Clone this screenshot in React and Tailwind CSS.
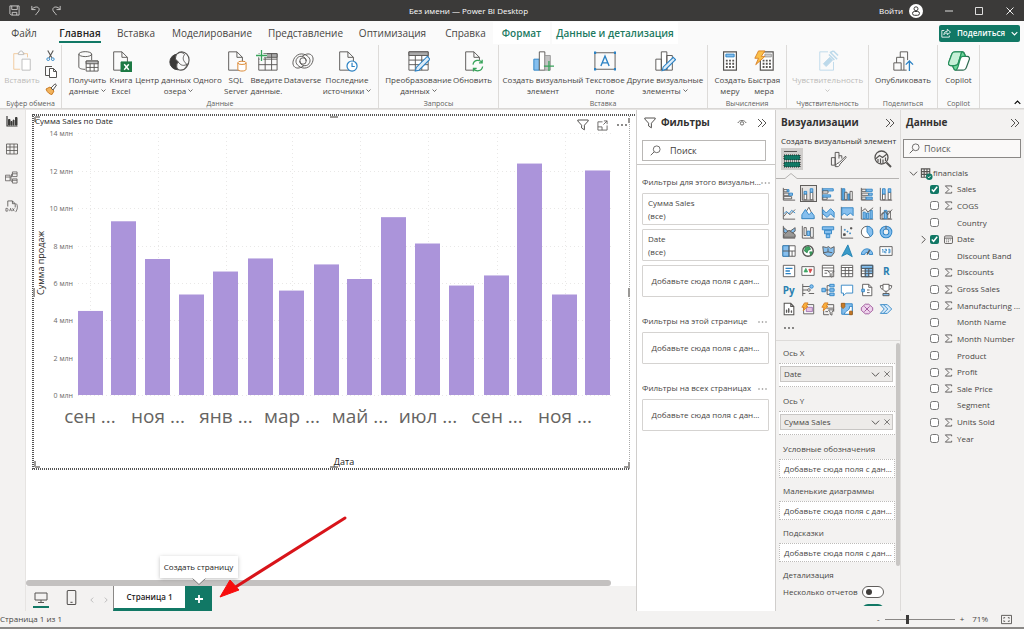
import React from 'react';

const DARK = '#565452';
const BLUE = '#2b82c4';
const SKY = '#86bfee';

// Small wrapper so that all line icons share the same stroke settings
const Svg = ({ box = 16, className = 'size-4', children }) => (
  <svg
    viewBox={`0 0 ${box} ${box}`}
    className={`shrink-0 ${className}`}
    fill="none"
    stroke={DARK}
    strokeWidth="1"
    aria-hidden="true"
  >
    {children}
  </svg>
);

const Chevrons = () => (
  <Svg box={10} className="size-[10px]">
    <path d="M1 1l4 4-4 4M5 1l4 4-4 4" />
  </Svg>
);

const ChevronDown = ({ className = 'size-[5px]', weight = 1.6 }) => (
  <svg viewBox="0 0 10 10" className={`inline-block shrink-0 ${className}`} fill="none" stroke="currentColor" strokeWidth={weight} aria-hidden="true">
    <path d="M1 3l4 4 4-4" />
  </svg>
);

const SearchIcon = () => (
  <Svg box={12} className="size-[11px]">
    <circle cx="7.3" cy="4.7" r="3.7" strokeWidth="0.9" />
    <path d="M4.6 7.4L0.8 11.2" />
  </Svg>
);

const FilterIcon = ({ className = 'size-3' }) => (
  <Svg box={12} className={className}>
    <path d="M0.8 1h10.4v1L7.4 6.2v4.6L4.6 9V6.2L0.8 2z" />
  </Svg>
);

/* ---------- Ribbon icons, 24 x 24 ---------- */
const pageShape = 'M4 2h9l6 6v14H4zM13 2v6h6';

const ribbonIcons = {
  paste: (
    <g>
      <path d="M8 4H3v17h7M13 4h5v4" stroke="#f0c79a" />
      <path d="M8 5V3h1a2 2 0 0 1 4 0h1v2z" stroke="#bbb" />
      <path d="M12 10h9v12h-9z" stroke="#bbb" fill="#fff" />
    </g>
  ),
  getData: (
    <g>
      <ellipse cx="9" cy="4.5" rx="7" ry="2.7" />
      <path d="M2 4.5v14c0 1.5 3 2.6 7 2.6M16 4.5V11" />
      <path d="M10 12h13v11H10z" fill="#fff" />
      <path d="M10 12h13v3H10z" fill="#bbb" />
      <path d="M10 19h13M14.3 15v8M18.7 15v8" />
    </g>
  ),
  excel: (
    <g>
      <path d={pageShape} />
      <path d="M12 13h12v11H12z" fill="#1d7a45" stroke="#1d7a45" />
      <path d="M15.5 15.5l5 6M20.5 15.5l-5 6" stroke="#fff" strokeWidth="1.6" />
    </g>
  ),
  oneLake: (
    <g>
      <circle cx="10.500" cy="13" r="8.500" fill="#3b3a39" stroke="#3b3a39" />
      <path d="M8 10c0-5 3-8 7-8s8 4 8 9-4 11-9 11-6-6-3-9z" fill="#fafafa" strokeWidth="1.200" />
      <path d="M9 5c3-3 7-3 9 0-2 3-2 6 1 9 2 2 2 3 0 5" />
      <path d="M11 13c3 4 6 5 11 2" />
    </g>
  ),
  sql: (
    <g>
      <path d={pageShape} />
      <path d="M14 14v7c0 2.600 9 2.600 9 0v-7" stroke="#d98025" fill="#fff" />
      <ellipse cx="18.500" cy="14" rx="4.500" ry="1.800" stroke="#d98025" fill="#fff" />
    </g>
  ),
  enterData: (
    <g>
      <path d="M3 4h20v18H3z" />
      <path d="M9 4h14v4H9z" fill="#aaa" />
      <path d="M3 10h20M3 16h20M10 6v16M17 4v18" />
      <path d="M6 0v12M0 6h12" stroke="#fafafa" strokeWidth="4" />
      <path d="M6 0v12M0 6h12" stroke="#37a35a" strokeWidth="1.400" />
    </g>
  ),
  dataverse: (
    <g>
      <circle cx="12" cy="12" r="3.500" />
      <path d="M8.500 12c0 5 7 7 10 3 3-4 0-9-6-10.500C6 3 1 9 1 14c0 4 3 6.500 7 5.500 2-.5 4-1.500 5-2.500" />
      <path d="M15.500 12c0-5-7-7-10-3-3 4 0 9 6 10.500C18 21 23 15 23 10c0-4-3-6.500-7-5.500-2 .5-4 1.500-5 2.500" />
    </g>
  ),
  recent: (
    <g>
      <path d={pageShape} />
      <circle cx="17.500" cy="17.500" r="5.500" fill="#fff" stroke={BLUE} strokeWidth="1.300" />
      <path d="M17.500 14v4h3" stroke={BLUE} strokeWidth="1.300" />
    </g>
  ),
  transform: (
    <g>
      <path d="M1 2h21v20H1z" fill="#fff" />
      <path d="M1 2h21v4H1z" fill="#aaa" />
      <path d="M1 11h21M1 16h21M8 6v16M15 6v16" />
      <path d="M21 7l3 3-12 12-4 1 1-4z" fill="#dcecf9" stroke={BLUE} strokeWidth="1.200" />
    </g>
  ),
  refresh: (
    <g>
      <path d={pageShape} />
      <circle cx="17" cy="17" r="6.500" fill="#fafafa" stroke="none" />
      <path d="M12 16a5.400 5.400 0 0 1 10-2M22 10.500V14h-3.500M22.500 18a5.400 5.400 0 0 1-10 2M12.500 23.500V20H16" stroke="#37a35a" strokeWidth="1.400" />
    </g>
  ),
  newVisual: (
    <g>
      <path d="M2 10h6v12H2z" fill={SKY} stroke={BLUE} />
      <path d="M8 2h6v20H8z" fill="#fff" />
      <path d="M14 6h6v16h-6z" fill="#c4c4c4" stroke="#999" />
      <path d="M18.500 12v11M13 17.500h11" stroke="#37a35a" strokeWidth="1.400" />
    </g>
  ),
  textBox: (
    <g>
      <path d="M1 3h22v18H1z" />
      <path d="M7.500 17.500L12 6.500l4.500 11M9 14h6" stroke={BLUE} strokeWidth="1.500" />
      <path d="M1 3h.1M23 3h.1M1 21h.1M23 21h.1" stroke={BLUE} strokeWidth="2.500" strokeLinecap="square" />
    </g>
  ),
  otherVisuals: (
    <g>
      <path d="M2 10h6v12H2zM8 2h6v20H8zM14 6h6v16h-6z" fill="#fff" />
      <path d="M21 8l2.500 2.500L13 21l-4 1.500 1-4z" fill="#dcecf9" stroke={BLUE} strokeWidth="1.200" />
    </g>
  ),
  measure: (
    <g>
      <path d="M5 2h14v20H5z" fill="#fff" strokeWidth="1.300" />
      <path d="M7.500 4.500h9v3h-9z" fill={SKY} stroke={BLUE} />
      <path d="M7.500 11.500h2m1.500 0h2m1.500 0h2M7.500 15h2m1.500 0h2m1.500 0h2M7.500 18.500h2m1.500 0h2m1.500 0h2" strokeWidth="2" />
    </g>
  ),
  quickMeasure: (
    <g>
      <path d="M8 2h14v20H8z" fill="#fff" strokeWidth="1.300" />
      <path d="M13 4.500h7v3h-7z" fill="#ccc" stroke="#999" />
      <path d="M10.500 11.500h2m1.500 0h2m1.500 0h2M10.500 15h2m1.500 0h2m1.500 0h2M10.500 18.500h2m1.500 0h2m1.500 0h2" strokeWidth="2" />
      <path d="M6 1h7L9 7h4L3 16l3-7H2z" fill="#fbc04a" stroke="#d98025" />
    </g>
  ),
  sensitivity: (
    <g stroke="#bcd9ea">
      <path d="M12 2H3v20h15V13" />
      <path d="M7 15l7-7 3 3-7 7z" fill="#bcd9ea" />
      <path d="M13 5l6 6M15 3l7 7M18 1l5 5M14 3l4-2" strokeWidth="1.600" />
    </g>
  ),
  publish: (
    <g>
      <path d="M2 22v-8h8v8zM5 14V8h8v14h-3M9 8V2h8v9M13 22h3" />
      <path d="M19 23V12M15 16l4-4 4 4" stroke={BLUE} strokeWidth="1.400" />
    </g>
  ),
  copilot: (
    <g strokeWidth="1.300">
      <path d="M8 2h8c2 0 2 2 3 5h2c2 0 3 2 2 4l-3 8c-1 3-2 3-4 3H9c-3 0-3-3-4-5H3c-2 0-3-2-2-4l3-8c1-3 2-3 4-3z" fill="#fff" stroke="#2d6b50" />
      <path d="M8 2h7l-4 13c-.5 2-2 2-4 2H3c-2 0-3-2-2-4l3-8c1-3 2-3 4-3z" fill="#c6f0d7" stroke="#25915c" />
      <path d="M15 2c2 0 3 2 4 5h-3c-2 0-2 1-3 4l-2 7c-1 3-2 4-3 4-2-1-2-3-3-5h2c2 0 3 0 4-2z" fill="#6fd79c" stroke="#25915c" />
    </g>
  ),
};

const RibbonButton = ({ icon, lines, width, disabled, arrow }) => (
  <button
    type="button"
    disabled={disabled}
    className={`flex shrink-0 flex-col items-center whitespace-nowrap text-[8px] leading-[11px] ${width} ${disabled ? 'text-[#bdbbb9]' : 'text-[#484644]'}`}
  >
    <Svg box={24} className="mb-[2px] size-[22px]">{ribbonIcons[icon]}</Svg>
    {lines.map((line, i) => (
      <span key={line} className="flex items-center gap-[2px]">
        {line}
        {arrow && i === lines.length - 1 && lines.length > 1 && <ChevronDown />}
      </span>
    ))}
    {arrow && lines.length === 1 && <ChevronDown className="mt-[3px] size-[5px]" />}
  </button>
);

const RibbonGroup = ({ label, width, children }) => (
  <div className={`flex shrink-0 flex-col justify-between border-r border-[#dddbd9] ${width}`}>
    <div className="flex justify-center pt-[5px]">{children}</div>
    <div className="text-center text-[7px] leading-[8px] text-[#605e5c]">{label}</div>
  </div>
);

const tabs = [
  { name: 'Файл', width: 'w-[48px]' },
  { name: 'Главная', width: 'w-[64px]', active: true },
  { name: 'Вставка', width: 'w-[48px]' },
  { name: 'Моделирование', width: 'w-[104px]' },
  { name: 'Представление', width: 'w-[83px]' },
  { name: 'Оптимизация', width: 'w-[91px]' },
  { name: 'Справка', width: 'w-[55px]' },
];

const TitleBar = () => (
  <header className="flex h-[21px] shrink-0 items-center bg-[#3b3a39] text-[8px] text-white">
    <div className="flex flex-1 items-center gap-[10px] pl-[9px]">
      <button type="button" aria-label="Сохранить">
        <svg viewBox="0 0 12 12" className="size-[11px]" fill="none" stroke="#d0cfce" aria-hidden="true">
          <path d="M1 1h10v10H2.500L1 9.500zM3 1v4h6V1M3.500 11V8h5v3" />
        </svg>
      </button>
      <button type="button" aria-label="Отменить">
        <svg viewBox="0 0 12 12" className="size-[11px]" fill="none" stroke="#d0cfce" aria-hidden="true">
          <path d="M2 1v4h4M2 5c2-3.500 8-4 8 0 0 2-2 3-4 6" />
        </svg>
      </button>
      <button type="button" aria-label="Повторить">
        <svg viewBox="0 0 12 12" className="size-[11px]" fill="none" stroke="#d0cfce" aria-hidden="true">
          <path d="M10 1v4H6M10 5C8 1.500 2 1 2 5c0 2 2 3 4 6" />
        </svg>
      </button>
    </div>
    <div>Без имени — Power BI Desktop</div>
    <div className="flex flex-1 items-center justify-end pr-[10px] pl-[86px]">
      <button type="button" className="flex items-center gap-[6px]">
        Войти
        <svg viewBox="0 0 14 14" className="size-[14px]" aria-hidden="true">
          <circle cx="7" cy="7" r="7" fill="#fff" />
          <circle cx="7" cy="4.800" r="2" fill="none" stroke="#3b3a39" />
          <rect x="3.500" y="7.500" width="7" height="3.800" rx="1.900" fill="none" stroke="#3b3a39" />
        </svg>
      </button>
      <button type="button" aria-label="Свернуть" className="ml-[22px]">
        <svg viewBox="0 0 8 8" className="size-2" stroke="#ddd" aria-hidden="true"><path d="M0 4h8" /></svg>
      </button>
      <button type="button" aria-label="Развернуть" className="ml-[22px]">
        <svg viewBox="0 0 8 8" className="size-2" fill="none" stroke="#ddd" aria-hidden="true"><path d="M.5.5h7v7h-7z" /></svg>
      </button>
      <button type="button" aria-label="Закрыть" className="ml-[23px]">
        <svg viewBox="0 0 8 8" className="size-2" stroke="#eee" aria-hidden="true"><path d="M.5.5l7 7M7.500.5l-7 7" /></svg>
      </button>
    </div>
  </header>
);

const TabBar = () => (
  <nav className="flex h-[24px] shrink-0 items-center bg-[#fafafa] text-[10px] text-[#484644]">
    {tabs.map((tab) => (
      <button key={tab.name} type="button" className={`flex h-full shrink-0 justify-center pt-[5px] leading-[14px] ${tab.width}`}>
        <span className={tab.active ? 'h-[17px] border-b-2 border-[#117865] font-semibold text-[#252423]' : ''}>{tab.name}</span>
      </button>
    ))}
    <button type="button" className="h-[22px] w-[57px] shrink-0 bg-white font-semibold text-[#217a5f]">Формат</button>
    <button type="button" className="ml-[2px] h-[22px] w-[126px] shrink-0 whitespace-nowrap bg-white font-semibold text-[#217a5f]">Данные и детализация</button>
    <button type="button" className="mr-1 ml-auto flex h-[17px] w-[81px] items-center justify-center gap-[6px] rounded-[2px] bg-[#117865] text-[8px] font-semibold text-white">
      <svg viewBox="0 0 12 12" className="size-[10px]" fill="none" stroke="#fff" aria-hidden="true">
        <path d="M4 3H1v8h9V9M3.500 8c0-3 2-4 4-4V1.500L11.500 5 7.500 8V6c-2 0-3 .5-4 2z" />
      </svg>
      Поделиться
      <ChevronDown className="size-[7px]" />
    </button>
  </nav>
);

const Ribbon = () => (
  <div className="flex h-[64px] shrink-0 border-b border-[#d9d7d5] bg-[#fafafa]">
    <RibbonGroup label="Буфер обмена" width="w-[62px]">
      <RibbonButton icon="paste" lines={['Вставить']} width="w-[36px]" disabled />
      <div className="ml-[5px] flex flex-col gap-[5px]">
        <button type="button" aria-label="Вырезать">
          <Svg box={12} className="size-[11px]">
            <path d="M3 .5l4.500 8M9 .5l-4.500 8" strokeWidth="1.200" />
            <circle cx="3.500" cy="10" r="1.500" stroke={BLUE} />
            <circle cx="8.500" cy="10" r="1.500" stroke={BLUE} />
          </Svg>
        </button>
        <button type="button" aria-label="Копировать">
          <Svg box={12} className="size-[12px]">
            <path d="M4 9.500H.5v-9H7" /><path d="M4.500 2.500h4l3 3v6h-7zM8.500 2.500v3h3" fill="#fff" />
          </Svg>
        </button>
        <button type="button" aria-label="Формат по образцу">
          <Svg box={12} className="size-[12px]">
            <path d="M1 6l4-2 4 4-2 3.500c-2 0-5-2-6-5.500z" fill="#f2b35c" stroke="#c97b25" />
            <path d="M6 5l2 2L11.500 2 10 .8z" fill="#fff" />
          </Svg>
        </button>
      </div>
    </RibbonGroup>
    <RibbonGroup label="Данные" width="w-[317px]">
      <RibbonButton icon="getData" lines={['Получить', 'данные']} width="w-[40px]" arrow />
      <RibbonButton icon="excel" lines={['Книга', 'Excel']} width="w-[27px]" />
      <RibbonButton icon="oneLake" lines={['Центр данных Одного', 'озера']} width="w-[88px]" arrow />
      <RibbonButton icon="sql" lines={['SQL', 'Server']} width="w-[27px]" />
      <RibbonButton icon="enterData" lines={['Введите', 'данные.']} width="w-[34px]" />
      <RibbonButton icon="dataverse" lines={['Dataverse']} width="w-[38px]" />
      <RibbonButton icon="recent" lines={['Последние', 'источники']} width="w-[51px]" arrow />
    </RibbonGroup>
    <RibbonGroup label="Запросы" width="w-[120px]">
      <RibbonButton icon="transform" lines={['Преобразование', 'данных']} width="w-[68px]" arrow />
      <RibbonButton icon="refresh" lines={['Обновить']} width="w-[40px]" />
    </RibbonGroup>
    <RibbonGroup label="Вставка" width="w-[209px]">
      <RibbonButton icon="newVisual" lines={['Создать визуальный', 'элемент']} width="w-[82px]" />
      <RibbonButton icon="textBox" lines={['Текстовое', 'поле']} width="w-[42px]" />
      <RibbonButton icon="otherVisuals" lines={['Другие визуальные', 'элементы']} width="w-[78px]" arrow />
    </RibbonGroup>
    <RibbonGroup label="Вычисления" width="w-[79px]">
      <RibbonButton icon="measure" lines={['Создать', 'меру']} width="w-[34px]" />
      <RibbonButton icon="quickMeasure" lines={['Быстрая', 'мера']} width="w-[34px]" />
    </RibbonGroup>
    <RibbonGroup label="Чувствительность" width="w-[82px]">
      <RibbonButton icon="sensitivity" lines={['Чувствительность']} width="w-[70px]" disabled arrow />
    </RibbonGroup>
    <RibbonGroup label="Поделиться" width="w-[69px]">
      <RibbonButton icon="publish" lines={['Опубликовать']} width="w-[58px]" />
    </RibbonGroup>
    <RibbonGroup label="Copilot" width="w-[42px]">
      <RibbonButton icon="copilot" lines={['Copilot']} width="w-[30px]" />
    </RibbonGroup>
    <button type="button" aria-label="Свернуть ленту" className="mt-auto mr-[3px] mb-[2px] ml-auto flex">
      <ChevronDown className="size-[7px] rotate-180" />
    </button>
  </div>
);

const SideRail = () => (
  <aside className="flex w-[26px] shrink-0 flex-col items-center gap-4 border-r border-[#e6e4e2] bg-[#f3f2f1] pt-[5px] pr-[2px]">
    <button type="button" aria-label="Отчет" className="flex">
      <Svg box={12} className="size-[12px]">
        <path d="M1 1v10h10.500" strokeWidth="1.200" stroke="#3b3a39" />
        <path d="M2.500 4.500h1.500V10H2.500zM5 6.500h1V10H5zM7.200 5H8v5h-.8zM9.500 2.500H11V10H9.500z" fill="#3b3a39" stroke="#3b3a39" />
      </Svg>
    </button>
    <button type="button" aria-label="Данные" className="flex">
      <Svg box={12} className="size-[12px]">
        <path d="M.5 1h11v10H.5zM.5 4h11M.5 7.500h11M4 1v10M8 1v10" strokeWidth="0.800" />
      </Svg>
    </button>
    <button type="button" aria-label="Модель" className="flex">
      <Svg box={14} className="size-[13px]">
        <path d="M.5 4.500h5v6h-5zM.5 6.500h5M8 1h5v5H8zM8 3h5M8 8.500h5V13H8zM8 10h5M5.500 6.500H7v-3h1M6.500 7v4H8" strokeWidth="0.800" />
      </Svg>
    </button>
    <button type="button" aria-label="Запросы DAX" className="flex">
      <Svg box={14} className="size-[13px]">
        <path d="M3 7V1h5l3 3v4M8 1v3h3" strokeWidth="0.900" />
        <path d="M1 9v3h1.500c1 0 1-3 0-3zM5 12l1-3 1 3M8 9l2 3M10 9l-2 3M12.500 4c1.500 3 1 6-1 9" strokeWidth="0.800" />
      </Svg>
    </button>
  </aside>
);

// Left edge and value (in millions) of every monthly bar
const bars = [
  { x: 46, v: 4.5 }, { x: 79, v: 9.3 }, { x: 113, v: 7.28 }, { x: 147, v: 5.38 },
  { x: 181, v: 6.61 }, { x: 216, v: 7.31 }, { x: 247, v: 5.59 }, { x: 282, v: 6.99 },
  { x: 315, v: 6.21 }, { x: 349, v: 9.52 }, { x: 383, v: 8.11 }, { x: 417, v: 5.86 },
  { x: 452, v: 6.4 }, { x: 485, v: 12.39 }, { x: 520, v: 5.38 }, { x: 553, v: 12.02 },
];

const months = [
  { x: 58, label: 'сен' }, { x: 126, label: 'ноя' }, { x: 194, label: 'янв' }, { x: 260, label: 'мар' },
  { x: 328, label: 'май' }, { x: 396, label: 'июл' }, { x: 465, label: 'сен' }, { x: 533, label: 'ноя' },
];

const BASE = 281;
const UNIT = 18.68;

const SalesChart = () => (
  <div className="relative">
    <svg viewBox="0 0 604 358" className="block w-full" role="img" aria-label="Сумма Sales по Date">
      <g fill="none" stroke="#555" strokeWidth="2" strokeDasharray="1 1">
        <path d="M0 1h603M1 0v356M0 355h598" />
        <path d="M597.500 2v354" stroke="#aaa" strokeWidth="1" />
      </g>
      <g stroke="#9a9896" strokeWidth="2">
        <path d="M3 3h5M3 3v5M298 3h8M597 174v9M597 4v5M3 353h5M3 347v6M298 353h8M592 353h6M597 348v6M2 174v9" />
      </g>
      <g stroke="#e9e8e7" strokeDasharray="1 3">
        {[0, 2, 4, 6, 8, 10, 12, 14].map((v) => (
          <path key={v} d={`M46 ${Math.round(BASE - v * UNIT) + 0.5}H579`} />
        ))}
        {months.map((m) => (
          <path key={m.x} d={`M${m.x + 0.5} 19V281`} />
        ))}
      </g>
      <g fill="#6b6967" fontSize="7" textAnchor="end">
        {[0, 2, 4, 6, 8, 10, 12, 14].map((v) => (
          <text key={v} x="41" y={Math.round(BASE - v * UNIT) + 3}>{v} млн</text>
        ))}
      </g>
      {bars.map((bar) => (
        <rect key={bar.x} x={bar.x} y={BASE - bar.v * UNIT} width="25" height={bar.v * UNIT} fill="#ab94da" />
      ))}
      <g fill="#666462" fontSize="19" textAnchor="middle">
        {months.map((m) => (
          <text key={m.x} x={m.x} y="309">{m.label} ...</text>
        ))}
      </g>
      <text x="3" y="10" fontSize="8" fill="#252423">Сумма Sales по Date</text>
      <text x="312" y="351" fontSize="9" textAnchor="middle" fill="#252423">Дата</text>
      <text transform="translate(12 149) rotate(-90)" fontSize="9" textAnchor="middle" fill="#252423">Сумма продаж</text>
    </svg>
    <div className="absolute top-[5px] right-[8px] flex items-center gap-[8px]">
      <button type="button" aria-label="Фильтры визуального элемента" className="flex"><FilterIcon className="size-[12px]" /></button>
      <button type="button" aria-label="Режим фокусировки" className="flex">
        <Svg box={12} className="size-[11px]">
          <path d="M6 2H1v9h10V6M7.500 1H11v3.500M11 1L7 5M1 7.500h4.500V11" strokeWidth="0.900" />
        </Svg>
      </button>
      <button type="button" aria-label="Дополнительные параметры" className="flex">
        <svg viewBox="0 0 12 4" className="h-[4px] w-[12px]" fill={DARK} aria-hidden="true">
          <circle cx="2" cy="2" r="0.900" /><circle cx="6" cy="2" r="0.900" /><circle cx="10" cy="2" r="0.900" />
        </svg>
      </button>
    </div>
  </div>
);

const PageBar = () => (
  <div className="flex h-[25px] shrink-0 bg-[#f3f2f1]">
    <button type="button" aria-label="Макет для компьютера" className="ml-[7px] flex h-[22px] w-[16px] flex-col items-center justify-between border-b-2 border-[#117865] pt-[5px]">
      <Svg box={14} className="size-[14px]">
        <path d="M1 2h12v7H1zM7 9v2M4 11.500h6" />
      </Svg>
    </button>
    <button type="button" aria-label="Макет для мобильных устройств" className="ml-[15px] pb-[3px]">
      <Svg box={14} className="size-[15px]">
        <rect x="3" y=".5" width="8" height="13" rx="1" /><path d="M6 11.500h2" />
      </Svg>
    </button>
    <button type="button" aria-label="Предыдущая страница" className="ml-[10px] text-[#bbb]"><ChevronDown className="size-[6px] rotate-90" /></button>
    <button type="button" aria-label="Следующая страница" className="ml-[8px] text-[#bbb]"><ChevronDown className="size-[6px] -rotate-90" /></button>
    <button type="button" className="ml-[4px] w-[72px] border-b-[3px] border-l border-b-[#117865] border-l-[#8a8886] bg-white text-[8px] font-semibold whitespace-nowrap text-[#252423]">Страница 1</button>
    <div className="relative">
      <button type="button" aria-label="Создать страницу" aria-describedby="new-page-tip" className="flex h-full w-[27px] items-center justify-center bg-[#117865]">
        <svg viewBox="0 0 8 8" className="size-2" stroke="#fff" strokeWidth="1.800" aria-hidden="true"><path d="M4 0v8M0 4h8" /></svg>
      </button>
      <div id="new-page-tip" role="tooltip" className="absolute bottom-[33px] left-1/2 flex h-[22px] w-[78px] -translate-x-1/2 items-center justify-center bg-white text-[8px] whitespace-nowrap text-[#252423] shadow-[0_1px_4px_rgba(0,0,0,0.25)]">
        Создать страницу
        <svg viewBox="0 0 14 7" className="absolute top-full left-1/2 h-[7px] w-[14px] -translate-x-1/2" aria-hidden="true">
          <path d="M0 0l7 6.500L14 0" fill="#fff" stroke="#777" />
          <path d="M0 0h14" stroke="#fff" />
        </svg>
      </div>
    </div>
  </div>
);

const Canvas = () => (
  <main className="relative flex min-w-0 flex-1 flex-col bg-white">
    <div className="min-h-0 flex-1 overflow-hidden pt-1 pl-[6px]">
      <SalesChart />
    </div>
    <div className="mr-[25px] h-[6px] shrink-0 rounded-full bg-[#c3c1c0]" />
    <PageBar />
    <svg viewBox="0 0 130 84" className="pointer-events-none absolute bottom-[13px] left-[192px] h-[84px] w-[130px]" aria-hidden="true">
      <path d="M127 4L16 74" stroke="#d8141a" strokeWidth="3" strokeLinecap="round" />
      <path d="M2 83l10-17 9 10z" fill="#f70d0d" stroke="#f70d0d" />
    </svg>
  </main>
);

const FilterCard = ({ title }) => (
  <div className="flex h-[32px] flex-col justify-center rounded-[1px] border border-[#d5d3d1] bg-white pl-[5px] text-[8px] leading-[13px] text-[#484644]">
    <span>{title}</span>
    <span>(все)</span>
  </div>
);

const DropArea = () => (
  <div className="flex h-[32px] items-center justify-center rounded-[1px] border border-[#d5d3d1] bg-white text-[8px] whitespace-nowrap text-[#484644]">
    Добавьте сюда поля с дан...
  </div>
);

const FilterSection = ({ title, children }) => (
  <section>
    <div className="mb-[4px] flex h-[14px] items-center justify-between text-[8px] whitespace-nowrap text-[#484644]">
      <h3>{title}</h3>
      <button type="button" aria-label="Дополнительно" className="flex pr-[2px]">
        <svg viewBox="0 0 9 4" className="h-[4px] w-[9px]" fill="#8a8886" aria-hidden="true">
          <circle cx="1" cy="3" r="0.800" /><circle cx="4.500" cy="3" r="0.800" /><circle cx="8" cy="3" r="0.800" />
        </svg>
      </button>
    </div>
    <div className="flex flex-col gap-1">{children}</div>
  </section>
);

const FiltersPane = () => (
  <aside className="flex w-[140px] shrink-0 flex-col border-x border-[#d0cecc] bg-white">
    <div className="flex h-[25px] items-center pr-[8px] pl-[7px]">
      <FilterIcon />
      <h2 className="ml-[5px] text-[10px] font-bold text-[#323130]">Фильтры</h2>
      <button type="button" aria-label="Показать фильтры" className="mr-[10px] ml-auto">
        <Svg box={12} className="size-[10px]">
          <path d="M1 6c2-4 8-4 10 0" /><circle cx="6" cy="6.500" r="2" />
        </Svg>
      </button>
      <button type="button" aria-label="Свернуть фильтры"><Chevrons /></button>
    </div>
    <div className="border-b border-[#c8c6c4] pt-[5px] pr-[9px] pb-[3px] pl-[5px]">
      <label className="flex h-[21px] items-center gap-[9px] border border-[#b9b7b5] pl-[7px]">
        <SearchIcon />
        <input type="text" aria-label="Поиск фильтров" placeholder="Поиск" className="w-full min-w-0 bg-transparent text-[9px] text-[#3f3d3b] outline-none placeholder:text-[#3f3d3b]" />
      </label>
    </div>
    <div className="flex flex-col gap-[17px] pt-[10px] pr-[6px] pl-[5px]">
      <FilterSection title="Фильтры для этого визуальн...">
        <FilterCard title="Сумма Sales" />
        <FilterCard title="Date" />
        <DropArea />
      </FilterSection>
      <FilterSection title="Фильтры на этой странице"><DropArea /></FilterSection>
      <FilterSection title="Фильтры на всех страницах"><DropArea /></FilterSection>
    </div>
  </aside>
);

/* ---------- Visual gallery icons, 16 x 16 ---------- */
const axes = 'M1.500 1v14H15';
const galleryIcons = [
  ['Линейчатая с накоплением', <><path d={axes} /><path d="M2 3h4v2.500H2zM2 7h6v2.500H2zM2 11h9v2.500H2z" fill="#fff" /><path d="M6 3h2v2.500H6zM8 7h4v2.500H8z" fill={SKY} stroke={BLUE} /></>],
  ['Гистограмма с накоплением', <><path d={axes} /><path d="M3.500 8h3v6.500h-3zM10.500 6h3v8.500h-3z" fill="#fff" /><path d="M3.500 5h3v3h-3zM10.500 2h3v4h-3z" fill={SKY} stroke={BLUE} /></>],
  ['Линейчатая с группировкой', <><path d={axes} /><path d="M2 2h12v2.500H2z" fill={SKY} stroke={BLUE} /><path d="M2 4.500h6V7H2zM2 11.500h5V14H2z" fill="#fff" /><path d="M2 9h9v2.500H2z" fill={SKY} stroke={BLUE} /></>],
  ['Гистограмма с группировкой', <><path d={axes} /><path d="M2.500 2h3v12.500h-3zM9 8h2.500v6.500H9z" fill="#5aa7e0" stroke={BLUE} /><path d="M5.500 6h2.500v8.500H5.500zM11.500 5H14v9.500h-2.500z" fill="#fff" /></>],
  ['Нормированная линейчатая', <><path d={axes} /><path d="M2 2.500h5V5H2zM2 7h8v2.500H2zM2 11.500h5V14H2z" fill="#fff" /><path d="M7 2.500h7V5H7zM10 7h4v2.500h-4zM7 11.500h7V14H7z" fill={SKY} stroke={BLUE} /></>],
  ['Нормированная гистограмма', <><path d={axes} /><path d="M4 8h3v6.500H4zM10.500 6h3v8.500h-3z" fill="#fff" /><path d="M4 2h3v6H4zM10.500 2h3v4h-3z" fill={SKY} stroke={BLUE} /></>],
  ['График', <><path d={axes} /><path d="M2 12l4-5 3 3 6-6" /><path d="M2 9l3-3 3 3 3-4 4 3" stroke={BLUE} /></>],
  ['Диаграмма с областями', <><path d="M1 14L9 1.500 15 14z" fill="#fff" /><path d="M1 14.500V10l4-6 4 6 3-3 3 4v3.500z" fill={SKY} stroke={BLUE} /></>],
  ['Диаграмма с областями с накоплением', <><path d={axes} /><path d="M2 4l4 4 5-5 4 4v6l-4-4-4 4-5-4z" fill={SKY} stroke={BLUE} /></>],
  ['Нормированная диаграмма с областями', <><path d={axes} /><path d="M2 2h13v9l-3-3-4 3-3-3-3 3z" fill={SKY} stroke={BLUE} /></>],
  ['Линейная и гистограмма с накоплением', <><path d={axes} /><path d="M3.500 7h2.500v7.500H3.500zM7.500 8H10v6.500H7.500zM11.500 5H14v9.500h-2.500z" fill={SKY} stroke={BLUE} /><path d="M2 6l4-3 3 4 6-5" /></>],
  ['Линейная и гистограмма с группировкой', <><path d={axes} /><path d="M3.500 8H6v6.500H3.500zM10 6h3v8.500h-3z" fill="#fff" /><path d="M6 5h3v9.500H6z" fill={SKY} stroke={BLUE} /><path d="M2 11l5-5 3 4 5-6" /></>],
  ['Ленточный график', <><path d={axes} /><path d="M2 3l6 5 7-5v4l-7 5-6-4z" fill={SKY} stroke={DARK} /><path d="M2 11l6-5 7 5v3H2z" fill="#9a9896" /></>],
  ['Каскадная диаграмма', <><path d={axes} /><path d="M3.500 3H6v9H3.500zM11 3h3v11h-3z" fill="#fff" /><path d="M7 7h3v5H7z" fill={SKY} stroke={BLUE} /></>],
  ['Воронка', <path d="M1.500 2h13v3.500h-13zM4 6h8v4H4zM6 10.500h4v4H6z" fill={SKY} stroke={BLUE} />],
  ['Точечная диаграмма', <><path d={axes} /><path d="M4 10h2v2H4zM12 3h1.500v1.500H12z" fill={DARK} /><path d="M5 5h1v1H5zM8 7h1v1H8zM11 9h1v1h-1z" stroke={BLUE} /></>],
  ['Круговая диаграмма', <><circle cx="8" cy="8" r="6.500" fill="#fff" /><path d="M8 1.500v6.500l4 5.500A6.600 6.600 0 0 0 8 1.500z" fill={SKY} stroke={BLUE} /></>],
  ['Кольцевая диаграмма', <><circle cx="8" cy="8" r="5" stroke={BLUE} strokeWidth="4.500" /><circle cx="8" cy="8" r="5" stroke={SKY} strokeWidth="2.500" /><path d="M8 1v4" /></>],
  ['Диаграмма дерева', <><path d="M1 2h14v12H1z" fill="#fff" /><path d="M1 2h7v12H1z" fill={SKY} stroke={BLUE} /><path d="M8 8h7M11.500 8v6M1 8h7M8 2v12" /></>],
  ['Карта', <><circle cx="8" cy="8" r="6" fill="#fff" strokeWidth="1.600" /><path d="M5 4l4-1 2 3-3 1-1 3-3-2zM10 9l3 0-2 4z" fill="#3fa564" stroke="#2f8a50" /></>],
  ['Заполненная карта', <path d="M2 3l4 1 3-1 2 2 4-2v7l-3 4-5 0-4-3z M8 5v4l-5 1M8 9l5 1" fill={SKY} stroke={DARK} />],
  ['Карта ArcGIS', <path d="M9 1l5 13.500L8 11l-6 3z" fill="#3a9bc9" stroke="#1e7fb0" />],
  ['Датчик', <><path d="M1.500 12a6.500 6.500 0 0 1 13 0h-4a2.500 2.500 0 0 0-5 0z" fill={SKY} stroke={BLUE} /><path d="M8 12l3-5" strokeWidth="1.600" /></>],
  ['Карточка', <><path d="M1 3h14v10H1z" fill="#fff" /><path d="M3.500 6.500L4.500 6v4M6.500 6h2v2h-2v2h2M10.500 6h2v4h-2M10.500 8h2" stroke={BLUE} /></>],
  ['Многострочная карточка', <><path d="M1.500 1.500h13v13h-13z" fill="#fff" /><path d="M4 5h8M4 8h5M4 11h6" stroke={BLUE} strokeWidth="1.600" /></>],
  ['Ключевой показатель эффективности', <><path d="M1 3h14v10H1z" fill="#fff" /><path d="M3.500 9l2-4 2 4z" fill="#3fa564" stroke="#3fa564" /><path d="M9 6l1.500 4L12.500 6z" fill="#d64545" stroke="#d64545" /></>],
  ['Срез', <><path d="M1.500 1.500h13v13h-13z" fill="#fff" /><path d="M1.500 4.500h13M4 7.500h4M4 10.500h3" /><path d="M8 8h7l-2.500 3v4l-2-1v-3z" fill="#fff" /></>],
  ['Таблица', <><path d="M1.500 1.500h13v13h-13z" fill="#fff" /><path d="M1.500 4h13M1.500 7.500h13M1.500 11h13M6 4v10.500M10 4v10.500" /></>],
  ['Матрица', <><path d="M1.500 1.500h13v13h-13z" fill="#fff" /><path d="M1.500 1.500h13V5h-13zM6 5h8.500v6H10v3.500H6z" fill={SKY} stroke={BLUE} /><path d="M1.500 1.500h13v13h-13zM1.500 5h13M1.500 8h13M1.500 11h13M6 5v9.500M10 5v9.500" /></>],
  ['R', 'R'],
  ['Python', 'Py'],
  ['Ключевые факторы влияния', <><path d="M2 1v14M2 4h8M2 8h5M2 12h3" /><circle cx="12" cy="4" r="2" fill={SKY} stroke={BLUE} /><circle cx="9" cy="8" r="1.500" fill="#fff" /><path d="M9 12h6" /></>],
  ['Дерево декомпозиции', <><path d="M5 8h4M7 3v10M7 3h3M7 13h3" /><path d="M1 6h4v4H1zM10 1.500h5v3h-5zM10 6.500h5v3h-5zM10 11.500h5v3h-5z" fill={SKY} stroke={BLUE} /></>],
  ['Вопросы и ответы', <path d="M1.500 2.500h13v9H7l-3 3v-3H1.500z" fill="#fff" stroke={BLUE} />],
  ['Интеллектуальное повествование', <><path d="M3 1.500h7l3.500 3.500v9.500H3zM10 1.500V5h3.500" fill="#fff" /><path d="M8 8h3M8 11h3" /><path d="M2 7h3v3H2z" fill={SKY} stroke={BLUE} /></>],
  ['Метрики', <><path d="M4.500 1.500h7v5c0 4-7 4-7 0zM4.500 3H1.500c0 3 1 4 3 4M11.500 3h3c0 3-1 4-3 4M8 9.500v3" fill="#fff" /><path d="M4.500 12h7v2.500h-7z" fill={SKY} stroke={DARK} /></>],
  ['Отчет с разбивкой на страницы', <><path d="M2.500 1.500H10L13.500 5v9.500h-11zM10 1.500V5h3.500" fill="#fff" strokeWidth="1.200" /><path d="M5 9h.5v3H5zM7.500 7.500H8V12h-.5zM10.500 10h.5v2h-.5z" fill={DARK} /></>],
  ['Power Apps', <><path d="M3 3h11.500v10.500H3z" fill="#fff" /><path d="M6 6h7v5H6z" fill="#e5c0de" stroke="#9a6db0" /><path d="M4 1h4L6 5h2L2.500 10l1-4H1z" fill="#fbb03b" stroke="#d98025" /></>],
  ['Power Automate', <><path d="M3 3h11.500v8M3 8v6.500h6M6 7h8M5 11h3" /><path d="M8.500 9h6l-2 2.500V15l-2-1v-2.500z" fill="#fff" /><path d="M4 1h4L6 5h2L2.500 10l1-4H1z" fill="#fbb03b" stroke="#d98025" /></>],
  ['Карта Azure', <><path d="M2 2h12v12H2z" fill={SKY} stroke={BLUE} /><path d="M5 14c1-5 6-3 6-9h3v9z" fill="#fff" stroke={BLUE} /><path d="M1.500 1.500h4v4l-2 2-2-2zM11 10.500h3v4h-3z" fill="#c97b25" stroke="#a55f17" /></>],
  ['Power Apps для Power BI', <path d="M6 2.500h4l4.500 4v3L10 13.500H6l-4.500-4v-3zM5 5l6 6M11 5l-6 6" stroke="#9a4f96" fill="#eed3ec" />],
  ['Power Automate для Power BI', <path d="M1.500 3h8l5 5-5 5h-8l4.500-5zM5 3l5 5-5 5" fill="#d9ebfa" stroke={BLUE} />],
];

const wells = [
  { title: 'Ось X', field: 'Date' },
  { title: 'Ось Y', field: 'Сумма Sales' },
  { title: 'Условные обозначения' },
  { title: 'Маленькие диаграммы' },
  { title: 'Подсказки' },
];

const Well = ({ title, field }) => (
  <section>
    <h3 className="pl-[4px] text-[8px] leading-[12px]">{title}</h3>
    {field ? (
      <div className="mt-[4px] mb-[8px] h-[24px] border-y border-dotted border-[#bdbbb9] bg-white pt-[2px]">
        <div className="mr-[2px] ml-[1px] flex h-[16px] items-center border border-[#c8c6c4] bg-[#edebe9] pr-[2px] pl-[3px] text-[8px]">
          <span className="flex-1">{field}</span>
          <button type="button" aria-label={`Меню поля ${field}`} className="flex"><ChevronDown className="size-[9px]" weight={1} /></button>
          <button type="button" aria-label={`Удалить поле ${field}`} className="ml-[4px] flex">
            <Svg box={8} className="size-[6px]"><path d="M.5.5l7 7M7.500.5l-7 7" /></Svg>
          </button>
        </div>
      </div>
    ) : (
      <div className="mt-[4px] mb-[7px] flex h-[19px] items-center justify-center overflow-hidden border border-dotted border-[#bdbbb9] bg-white pl-[2px] text-[8px] whitespace-nowrap">
        Добавьте сюда поля с дан...
      </div>
    )}
  </section>
);

const VisualizationsPane = () => (
  <aside className="flex w-[125px] shrink-0 flex-col border-r border-[#dddbd9] bg-[#f3f2f1] text-[#484644]">
    <div className="flex h-[25px] items-center justify-between pr-[5px] pl-[5px]">
      <h2 className="text-[10px] font-bold text-[#323130]">Визуализации</h2>
      <button type="button" aria-label="Свернуть визуализации"><Chevrons /></button>
    </div>
    <p className="pl-[5px] text-[8px] leading-[12px] whitespace-nowrap text-[#323130]">Создать визуальный элемент</p>
    <div className="mt-[1px] flex h-[22px] items-center justify-between pr-[8px] pl-[5px]">
      <button type="button" aria-label="Создать визуальный элемент" className="flex size-[22px] items-center justify-center bg-[#d0cecc]">
        <Svg box={18} className="size-[18px]">
          <path d="M1 1.500h13" />
          <path d="M1 5h16v5H1zM1 12h16v5H1z" fill="#117865" stroke="#252423" strokeDasharray="1 1" />
        </Svg>
      </button>
      <button type="button" aria-label="Формат визуального элемента">
        <Svg box={18} className="size-[17px]">
          <path d="M1.500 7h4v8M5.500 15V1.500h4V8M9.500 5h3v3M1.500 7v8h5" />
          <path d="M16.500 5.500L10 12l-1.500 1c-2 0-2 2-3 3.500 3 .5 5-.5 5-2.500l6.500-7z" fill="#fff" />
        </Svg>
      </button>
      <button type="button" aria-label="Аналитика">
        <Svg box={18} className="size-[18px]">
          <circle cx="7.500" cy="7.500" r="6.500" strokeWidth="1.300" />
          <path d="M12.500 12.500l4.500 4.500" strokeWidth="2" />
          <path d="M1.500 9l4-3.500 3 2L13 4M4 12V9M6.500 13V8.500M9 13V9.500M11.500 11V7.500" strokeWidth="1.200" />
        </Svg>
      </button>
    </div>
    <svg viewBox="0 0 123 6" className="mt-[3px] h-[6px] w-[123px] shrink-0" fill="none" stroke="#b5b3b1" aria-hidden="true">
      <path d="M0 5.500h9l6-5 6 5h102" />
    </svg>
    <div className="grid h-[140px] w-[120px] shrink-0 grid-cols-6 pt-[5px] pl-[3px]">
      {galleryIcons.map(([name, art], i) => (
        <button
          key={name}
          type="button"
          aria-label={name}
          className={`m-auto flex size-[17px] items-center justify-center ${i === 1 ? 'border border-[#605e5c] bg-[#e6e4e2]' : ''}`}
        >
          {typeof art === 'string'
            ? <span className="text-[10px] leading-none font-bold text-[#2b7fb0]">{art}</span>
            : <Svg className="size-[14px]">{art}</Svg>}
        </button>
      ))}
    </div>
    <button type="button" aria-label="Получить другие визуальные элементы" className="flex h-[18px] shrink-0 items-center self-start pl-[7px]">
      <svg viewBox="0 0 12 4" className="h-[4px] w-[12px]" fill={DARK} aria-hidden="true">
        <circle cx="2" cy="2" r="0.900" /><circle cx="6" cy="2" r="0.900" /><circle cx="10" cy="2" r="0.900" />
      </svg>
    </button>
    <div className="mt-[3px] mb-[5px] flex min-h-0 flex-1 border-t border-[#dddbd9]">
      <div className="min-w-0 flex-1 overflow-hidden pt-[6px] pl-[3px]">
        {wells.map((well) => <Well key={well.title} {...well} />)}
        <h3 className="pl-[4px] text-[8px] leading-[12px]">Детализация</h3>
        <label className="mt-[5px] flex items-center justify-between pr-[11px] pl-[4px] text-[8px] leading-[12px] whitespace-nowrap">
          Несколько отчетов
          <input type="checkbox" className="flex h-[12px] w-[22px] appearance-none items-center rounded-full border border-[#605e5c] bg-white pl-[3px] before:size-[6px] before:rounded-full before:bg-[#3f3d3b]" />
        </label>
        <label className="mt-[6px] flex justify-end pr-[11px]">
          <input type="checkbox" defaultChecked aria-label="Сохранить все фильтры" className="h-[12px] w-[22px] appearance-none rounded-full bg-[#117865]" />
        </label>
      </div>
      <div className="mt-[2px] mb-[40px] ml-[1px] w-[4px] rounded-full bg-[#c8c6c4]" />
    </div>
  </aside>
);

const fields = [
  { name: 'Sales', sum: true, checked: true },
  { name: 'COGS', sum: true },
  { name: 'Country' },
  { name: 'Date', date: true, checked: true },
  { name: 'Discount Band' },
  { name: 'Discounts', sum: true },
  { name: 'Gross Sales', sum: true },
  { name: 'Manufacturing ...', sum: true },
  { name: 'Month Name' },
  { name: 'Month Number', sum: true },
  { name: 'Product' },
  { name: 'Profit', sum: true },
  { name: 'Sale Price', sum: true },
  { name: 'Segment' },
  { name: 'Units Sold', sum: true },
  { name: 'Year', sum: true },
];

const DataPane = () => (
  <aside className="w-[123px] shrink-0 bg-[#f3f2f1] text-[#484644]">
    <div className="flex h-[25px] items-center justify-between pr-[4px] pl-[5px]">
      <h2 className="text-[10px] font-bold text-[#323130]">Данные</h2>
      <button type="button" aria-label="Свернуть данные"><Chevrons /></button>
    </div>
    <label className="mt-[4px] mr-[3px] ml-[2px] flex h-[19px] items-center gap-[4px] border border-[#8a8886] bg-[#faf9f8] pl-[5px]">
      <SearchIcon />
      <input type="text" aria-label="Поиск данных" placeholder="Поиск" className="w-full min-w-0 bg-transparent text-[9px] outline-none placeholder:text-[#605e5c]" />
    </label>
    <button type="button" className="mt-[7px] ml-[8px] flex h-[16px] items-center text-[8px]">
      <ChevronDown className="size-[9px]" weight={1} />
      <Svg box={14} className="ml-[2px] size-[13px]">
        <path d="M1.500 2h9v9h-9zM1.500 5h9M1.500 8h9M4.500 2v9M7.500 2v9" strokeWidth="1.200" />
        <circle cx="10" cy="10.500" r="3.500" fill="#117865" stroke="none" />
        <path d="M8.300 10.500l1.200 1.200 2-2.200" stroke="#fff" />
      </Svg>
      financials
    </button>
    <ul className="grid h-[266px] auto-rows-fr">
      {fields.map((field) => (
        <li key={field.name} className="flex items-center pl-[18px]">
          <span className="w-[11px]">
            {field.date && (
              <button type="button" aria-label="Развернуть Date" className="flex"><ChevronDown className="size-[9px] -rotate-90" weight={1} /></button>
            )}
          </span>
          <label className="flex items-center text-[8px] whitespace-nowrap">
            <input type="checkbox" defaultChecked={field.checked} className="m-0 size-[9px] accent-[#117865]" />
            <span className="flex w-[18px] justify-center">
              {field.sum && (
                <Svg box={10} className="size-[9px]"><path d="M8.500 2.500V1H1.500l4 4-4 4h7V7.500" /></Svg>
              )}
              {field.date && (
                <Svg box={10} className="size-[9px]">
                  <rect x=".5" y="1" width="9" height="8.500" rx="1.500" /><path d="M.5 3.500h9M2.500 5.500h1m1 0h1m1 0h1M2.500 7.500h1m1 0h1" />
                </Svg>
              )}
            </span>
            {field.name}
          </label>
        </li>
      ))}
    </ul>
  </aside>
);

const StatusBar = () => (
  <footer className="flex h-[18px] shrink-0 items-center border-b-2 border-[#8a8886] bg-[#f3f2f1] text-[8px] text-[#484644]">
    <span>Страница 1 из 1</span>
    <button type="button" aria-label="Уменьшить" className="ml-auto">-</button>
    <input
      type="range"
      min="10"
      max="200"
      defaultValue="71"
      aria-label="Масштаб"
      className="mx-[5px] h-[9px] w-[70px] appearance-none bg-transparent [&::-webkit-slider-runnable-track]:h-[1px] [&::-webkit-slider-runnable-track]:bg-[#8a8886] [&::-webkit-slider-thumb]:mt-[-4px] [&::-webkit-slider-thumb]:h-[9px] [&::-webkit-slider-thumb]:w-[3px] [&::-webkit-slider-thumb]:appearance-none [&::-webkit-slider-thumb]:bg-[#3b3a39]"
    />
    <button type="button" aria-label="Увеличить">+</button>
    <span className="ml-[8px]">71%</span>
    <button type="button" aria-label="По размеру страницы" className="mr-[12px] ml-[13px]">
      <Svg box={12} className="size-[11px]">
        <path d="M.5 1.500h11v9H.5z" /><path d="M3 5V4h1.500M7.500 4H9v1M9 7v1H7.500M4.500 8H3V7" />
      </Svg>
    </button>
  </footer>
);

const App = () => (
  <div className="flex h-screen flex-col overflow-hidden bg-[#f3f2f1] font-['Open_Sans','Noto_Sans',sans-serif]">
    <TitleBar />
    <TabBar />
    <Ribbon />
    <div className="flex min-h-0 flex-1 border-t border-[#e6e4e2]">
      <SideRail />
      <Canvas />
      <FiltersPane />
      <VisualizationsPane />
      <DataPane />
    </div>
    <StatusBar />
  </div>
);

export default App;
